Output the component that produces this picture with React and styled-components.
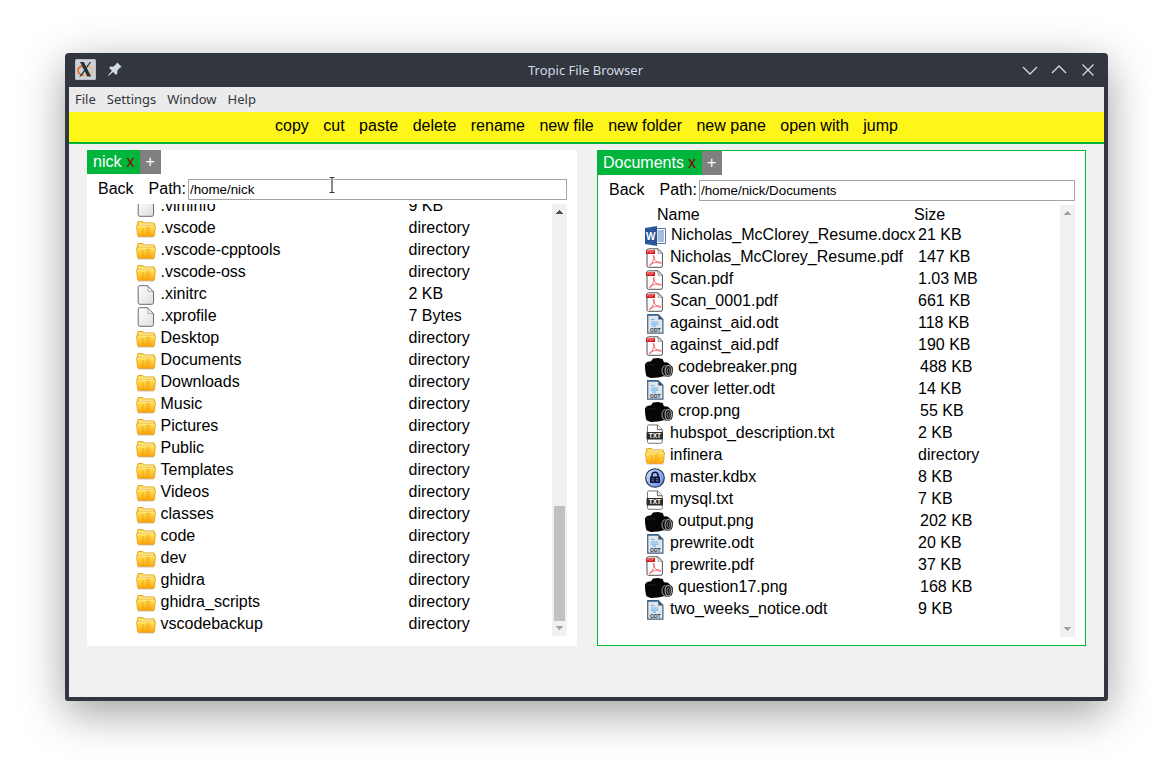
import React, { useId } from "react";
import styled, { createGlobalStyle } from "styled-components";

const GREEN = "#00b53c";
const FRAME = "#31363f";

const GlobalStyle = createGlobalStyle`
  *, *::before, *::after { box-sizing: border-box; }
  body {
    margin: 0;
    background: #fff;
    color: #000;
    font-family: "Liberation Sans", Arial, sans-serif;
    font-size: 16px;
  }
  button {
    font: inherit;
    color: inherit;
    background: none;
    border: 0;
    margin: 0;
    padding: 0;
    cursor: pointer;
  }
`;

const Desktop = styled.div`
  display: flex;
  height: 100vh;
  min-height: 480px;
  padding: 53px 65px 77px;
`;

const Window = styled.div`
  flex: 1;
  min-width: 0;
  display: flex;
  flex-direction: column;
  padding: 0 4px 4px;
  background: ${FRAME};
  border-radius: 4px 4px 3px 3px;
  box-shadow: 0 12px 44px rgba(0, 0, 0, 0.38);
`;

const TitleBar = styled.header`
  display: grid;
  grid-template-columns: 1fr auto 1fr;
  align-items: center;
  height: 34px;
  padding: 0 8px 0 6px;
  color: #d3dae3;
  font-family: "Noto Sans", sans-serif;
  font-size: 13px;
`;

const TitleGroup = styled.div`
  display: flex;
  align-items: center;
  justify-content: ${(p) => (p.$end ? "flex-end" : "flex-start")};
  gap: ${(p) => (p.$end ? "13px" : "11px")};
  padding-bottom: 1px;
`;

const Title = styled.h1`
  margin: 0;
  font-size: 13px;
  font-weight: 400;
`;

const TitleButton = styled.button`
  display: flex;
  svg { display: block; }
`;

const MenuBar = styled.nav`
  display: flex;
  gap: 11px;
  height: 25px;
  padding: 0 6px 2px;
  background: #ebebeb;
  color: #31363b;
  font-family: "Noto Sans", sans-serif;
  font-size: 13px;
`;

const Toolbar = styled.div`
  height: 32px;
  background: #fff619;
  border-bottom: 2px solid ${GREEN};
  line-height: 28px;
  text-align: center;
  white-space: nowrap;
`;

const ToolButton = styled.button`
  padding: 0 5px;
`;

const Workspace = styled.main`
  flex: 1;
  min-height: 0;
  display: grid;
  grid-template-columns: repeat(2, minmax(0, 1fr));
  grid-template-rows: minmax(0, 1fr);
  gap: 20px;
  padding: 6px 17px 51px 18px;
  background: #f1f1f1;
`;

const PaneBox = styled.section`
  min-width: 0;
  display: flex;
  flex-direction: column;
  margin-right: ${(p) => (p.$active ? "1px" : "0")};
  padding-bottom: ${(p) => (p.$active ? "8px" : "10px")};
  background: #fff;
  border: ${(p) => (p.$active ? `1px solid ${GREEN}` : "0")};
`;

const Tabs = styled.div`
  display: flex;
  height: 24px;
  color: #fff;
  line-height: 24px;
`;

const Tab = styled.div`
  display: flex;
  gap: ${(p) => (p.$active ? "4px" : "5px")};
  padding: 0 6px 0 ${(p) => (p.$active ? "5px" : "6px")};
  background: ${GREEN};
`;

const CloseTab = styled.button`
  color: #8b0000;
`;

const AddTab = styled.button`
  padding: 0 6px 0 5px;
  background: #808080;
`;

const PathRow = styled.div`
  display: flex;
  align-items: flex-start;
  height: 21px;
  margin: 5px 10px 4px;
  padding-left: 1px;
  line-height: 20px;
`;

const BackButton = styled.button`
  margin-right: 15px;
`;

const PathLabel = styled.label`
  margin-right: 2px;
`;

const PathField = styled.div`
  position: relative;
  flex: 1;
  min-width: 0;
`;

const PathInput = styled.input`
  display: block;
  width: 100%;
  height: 21px;
  padding: 1px;
  border: 1px solid #a5a5a5;
  background: #fff;
  color: #000;
  font-family: inherit;
`;

const TextPointer = styled.svg`
  position: absolute;
  left: 139px;
  top: -3px;
  pointer-events: none;
`;

const Listing = styled.div`
  flex: 1;
  min-height: 0;
  display: flex;
  margin: 0 10px;
`;

const ListView = styled.div`
  flex: 1;
  min-width: 0;
  display: flex;
  flex-direction: column;
  justify-content: ${(p) => (p.$scrolledToEnd ? "flex-end" : "flex-start")};
  align-items: center;
  overflow: hidden;
`;

const FileTable = styled.table`
  flex: none;
  width: 378px;
  table-layout: fixed;
  border-collapse: collapse;
  white-space: nowrap;
`;

const HeadCell = styled.th`
  width: ${(p) => (p.$name ? "269px" : "auto")};
  height: 20px;
  padding: 0 0 1px ${(p) => (p.$name ? "12px" : "0")};
  font-weight: 400;
  line-height: 19px;
  text-align: left;
`;

const NameCell = styled.td`
  width: 269px;
  height: 22px;
  padding: 0;
`;

const NameContent = styled.div`
  display: flex;
  gap: 5px;
  height: 22px;
  line-height: 20px;
  svg { flex: none; margin-top: 1px; }
`;

const SizeCell = styled.td`
  height: 22px;
  padding: 0 0 2px ${(p) => (p.$wide ? "6px" : "4px")};
  line-height: 20px;
`;

const ScrollBar = styled.div`
  width: 15px;
  display: flex;
  flex-direction: column;
  background: #f1f1f1;
`;

const ScrollArrow = styled.button`
  display: flex;
  align-items: center;
  justify-content: center;
  height: 15px;
  padding-bottom: ${(p) => (p.$down ? "1px" : "0")};
  color: ${(p) => (p.disabled ? "#a3a3a3" : "#505050")};
`;

const ScrollTrack = styled.div`
  flex: 1;
  display: flex;
  flex-direction: column;
  justify-content: flex-end;
  padding: 0 2px;
`;

const ScrollThumb = styled.div`
  height: 28.6%;
  background: #c1c1c1;
`;

const BadgeText = styled.text`
  font-family: "Liberation Sans", Arial, sans-serif;
  font-weight: 700;
  text-anchor: middle;
`;

const art = { width: 20, height: 20, viewBox: "0 0 20 20", "aria-hidden": true };

function FolderIcon() {
  return (
    <svg {...art}>
      <defs>
        <linearGradient id="folderFace" x1="0" y1="0" x2="0" y2="1">
          <stop offset="0" stopColor="#ffe75c" />
          <stop offset="1" stopColor="#ffa60c" />
        </linearGradient>
      </defs>
      <path d="M1.500 8V3.400q0-.9.9-.9h4.400l1.400 1.400h9.400q.9 0 .9.900V8z" fill="#ffd94a" stroke="#d9970f" strokeWidth=".8" />
      <path d="M3 5.300h14" stroke="#fff8cf" strokeWidth="1.200" />
      <path d="M.5 7q-.1-.8.7-.8h17.600q.8 0 .7.800l-1 9.400q-.1 1-1.100 1H2.600q-1 0-1.100-1z" fill="url(#folderFace)" stroke="#e8980c" strokeWidth=".7" />
      <path d="M7 9v7.300h3.800V8.600l2-1.400v8" fill="none" stroke="#ee9c10" strokeWidth=".7" />
      <path d="M1.300 7.100h17.400" stroke="#fff3a6" strokeWidth=".8" />
      <path d="M2 18.300h16" stroke="#999" strokeOpacity=".35" />
    </svg>
  );
}

function FileIcon() {
  return (
    <svg {...art}>
      <defs>
        <linearGradient id="paper" x1="0" y1="0" x2="1" y2="1">
          <stop offset="0" stopColor="#fff" />
          <stop offset="1" stopColor="#dedede" />
        </linearGradient>
      </defs>
      <path d="M4 .7h7.600l5.900 6v10.800q0 1.800-1.800 1.800H4q-1.800 0-1.800-1.800v-15Q2.200.7 4 .7z" fill="url(#paper)" stroke="#6b6b6b" />
      <path d="M11.500 1q.9 2.300.4 5.300 3-.3 5.400.6z" fill="#fff" stroke="#8a8a8a" strokeWidth=".7" />
    </svg>
  );
}

function WordIcon() {
  return (
    <svg {...art} width="21" viewBox="0 0 21 20">
      <path d="M11 2.500h9.500v15H11z" fill="#fff" stroke="#2b579a" strokeWidth=".8" />
      <path d="M12.500 5h6.500M12.500 7h6.500M12.500 9h6.500M12.500 11h6.500M12.500 13h6.500M12.500 15h6.500" stroke="#4f78b6" strokeWidth="1" />
      <path d="M0 2 12 0v20L0 18z" fill="#2a5699" />
      <BadgeText x="5.800" y="13.500" fontSize="10" fill="#fff">W</BadgeText>
    </svg>
  );
}

function PdfIcon() {
  return (
    <svg {...art}>
      <path d="M3.500.8h9.700l4.200 4.300v12.700q0 1.500-1.500 1.500H3.500Q2 19.300 2 17.800V2.300Q2 .8 3.500.8z" fill="#fff" stroke="#505050" />
      <path d="M12.800 1q.6 2 .3 4.300 2.400-.2 4.200.2z" fill="#eee" stroke="#777" strokeWidth=".7" />
      <path d="M1 2h9v4H1z" fill="#d81419" />
      <BadgeText x="5.500" y="5.200" fontSize="3.500" fill="#f2a0a0">PDF</BadgeText>
      <path d="M9 7.300q-1 0-.6 1.400.9 3.300 3.700 5.400 2.400 1.500 3.800 1.100.6-1-1.700-1.200-4.700-.2-8.400 1.900-2 1.300-1.300 1.800 1.200.4 3.200-3.600Q9.800 9.300 9 7.300z" fill="none" stroke="#f04a50" strokeWidth=".8" />
    </svg>
  );
}

function OdtIcon() {
  return (
    <svg {...art}>
      <path d="M2.700.8h10.700l4.500 4.500v13.900H2.700z" fill="#dfe6ec" stroke="#49617a" strokeWidth="1.200" />
      <path d="M2.100.8h11.500" stroke="#2f5f8c" strokeWidth="1.400" />
      <path d="M13.300.8v4.600h4.600z" fill="#34536f" />
      <path d="M6 5.500h3.500M6 8h7M6 10.200h7.500M7.500 12.200h3.500" stroke="#6bb5f2" strokeWidth="1.200" />
      <BadgeText x="10.300" y="18" fontSize="5" fill="#22323f">ODT</BadgeText>
    </svg>
  );
}

function TxtIcon() {
  return (
    <svg {...art}>
      <path d="M4 .9h8.600l4.700 4.600v12.300q0 1.500-1.500 1.500H4q-1.500 0-1.500-1.500V2.400Q2.500.9 4 .9z" fill="#fff" stroke="#777" />
      <path d="M12.400 1v4.700h4.700" fill="#f1f1f1" stroke="#555" strokeWidth=".9" />
      <rect x="1.500" y="8" width="16.500" height="7.500" rx="1" fill="#2d2d2d" />
      <BadgeText x="9.800" y="14" fontSize="6.500" fill="#fff">TXT</BadgeText>
    </svg>
  );
}

function KeyFileIcon() {
  return (
    <svg {...art}>
      <defs>
        <linearGradient id="vault" x1="0" y1="0" x2="1" y2="1">
          <stop offset="0" stopColor="#d9e4ff" />
          <stop offset="1" stopColor="#5580f0" />
        </linearGradient>
      </defs>
      <circle cx="10" cy="10" r="9.300" fill="url(#vault)" stroke="#252b40" strokeWidth="1.100" />
      <path d="M7 9V7.300a3 3 0 0 1 6 0V9" fill="none" stroke="#10152c" strokeWidth="1.600" />
      <rect x="5" y="8.600" width="10" height="6.400" rx=".8" fill="#10152c" />
      <path d="M6.500 10.800h7M6.500 12.900h7" stroke="#7f9bea" strokeWidth=".8" />
      <path d="M10 10v4" stroke="#10152c" strokeWidth="1.800" />
    </svg>
  );
}

function CameraIcon() {
  return (
    <svg width="28" height="20" viewBox="0 0 28 20" aria-hidden="true">
      <path d="M0 6.200 2 4l4-.8L8 .6l5-.5 4.600 1 1.400 3.200 3.500.3 2.700 2.200 2.400 2.200q.8 5-.9 8.200l-2.500 1.500-5.500-.5-5.500 1.300-7.500.4-4.300-1.700Q-.3 12 0 6.200z" fill="#060606" />
      <path d="M1.500 7.500q4-1.500 8.500-.5" fill="none" stroke="#2c2c2c" strokeWidth=".7" />
      <path d="M20.500 7.500q-3.500 1-3.500 5t3.500 5.500" fill="none" stroke="#8a8a8a" strokeWidth="1.100" />
      <ellipse cx="23.300" cy="12.600" rx="3.200" ry="5.300" fill="#222" stroke="#999" strokeWidth="1.200" />
      <ellipse cx="23.500" cy="12.800" rx="1.200" ry="2.600" fill="#0a0a0a" stroke="#c8c8c8" strokeWidth=".5" />
    </svg>
  );
}

function AppLogo() {
  return (
    <svg width="21" height="21" viewBox="0 0 21 21" aria-hidden="true">
      <rect width="21" height="21" rx="1.500" fill="#b9c0c4" />
      <rect x="1" y="1" width="19" height="19" rx="1" fill="#cbd1d4" />
      <ellipse cx="10.500" cy="11.500" rx="7.600" ry="4.800" fill="none" stroke="#efb775" strokeWidth="1.200" />
      <path d="M8.500 6.900Q3 7.800 3 11.500t5.500 4.800" fill="none" stroke="#f26522" strokeWidth="1.600" />
      <path d="M5 3h3.800l7.400 14.600h-3.900z" fill="#2b3236" />
      <path d="M14.800 3h1.400l-4.900 6.800-.6-1.300zM9.100 11l.7 1.400-3.900 5.200H4.400z" fill="#2b3236" />
    </svg>
  );
}

function PinIcon() {
  return (
    <svg width="15" height="15" viewBox="0 0 15 15" aria-hidden="true">
      <path d="M10.200.4 14.600 4.800l-.8.8-.7-.1-2.900 3.200.2 2.900-1.300 1.300-3-3L1.300 14 .9 13.600l4-4.900-2.900-2.900 1.300-1.300 2.900.2 3.300-2.900-.1-.6z" fill="#d3dae3" />
    </svg>
  );
}

function WindowGlyph({ d }) {
  return (
    <svg width="16" height="16" viewBox="0 0 16 16" fill="none" stroke="#d3dae3" strokeWidth="1.300" aria-hidden="true">
      <path d={d} />
    </svg>
  );
}

const icons = {
  folder: FolderIcon,
  file: FileIcon,
  word: WordIcon,
  pdf: PdfIcon,
  odt: OdtIcon,
  txt: TxtIcon,
  key: KeyFileIcon,
  image: CameraIcon,
};

const folder = (name) => ["folder", name, "directory"];

const homeFiles = [
  ["file", ".viminfo", "9 KB"],
  folder(".vscode"),
  folder(".vscode-cpptools"),
  folder(".vscode-oss"),
  ["file", ".xinitrc", "2 KB"],
  ["file", ".xprofile", "7 Bytes"],
  ...["Desktop", "Documents", "Downloads", "Music", "Pictures", "Public", "Templates", "Videos",
    "classes", "code", "dev", "ghidra", "ghidra_scripts", "vscodebackup"].map(folder),
];

const documentFiles = [
  ["word", "Nicholas_McClorey_Resume.docx", "21 KB"],
  ["pdf", "Nicholas_McClorey_Resume.pdf", "147 KB"],
  ["pdf", "Scan.pdf", "1.03 MB"],
  ["pdf", "Scan_0001.pdf", "661 KB"],
  ["odt", "against_aid.odt", "118 KB"],
  ["pdf", "against_aid.pdf", "190 KB"],
  ["image", "codebreaker.png", "488 KB"],
  ["odt", "cover letter.odt", "14 KB"],
  ["image", "crop.png", "55 KB"],
  ["txt", "hubspot_description.txt", "2 KB"],
  folder("infinera"),
  ["key", "master.kdbx", "8 KB"],
  ["txt", "mysql.txt", "7 KB"],
  ["image", "output.png", "202 KB"],
  ["odt", "prewrite.odt", "20 KB"],
  ["pdf", "prewrite.pdf", "37 KB"],
  ["image", "question17.png", "168 KB"],
  ["odt", "two_weeks_notice.odt", "9 KB"],
];

const actions = ["copy", "cut", "paste", "delete", "rename", "new file", "new folder", "new pane", "open with", "jump"];

function Arrow({ down }) {
  return (
    <svg width="7" height="4" viewBox="0 0 7 4" shapeRendering="crispEdges" aria-hidden="true">
      <path d={down ? "M0 0h7L3.500 4z" : "M0 4h7L3.500 0z"} fill="currentColor" />
    </svg>
  );
}

function Pane({ tab, path, files, active, header, scrolled, pointer }) {
  const id = useId();
  return (
    <PaneBox $active={active}>
      <Tabs>
        <Tab $active={active}>
          <button type="button">{tab}</button>
          <CloseTab type="button">x</CloseTab>
        </Tab>
        <AddTab type="button">+</AddTab>
      </Tabs>
      <PathRow>
        <BackButton type="button">Back</BackButton>
        <PathLabel htmlFor={id}>Path:</PathLabel>
        <PathField>
          <PathInput id={id} type="text" defaultValue={path} spellCheck={false} />
          {pointer && (
            <TextPointer width="10" height="19" viewBox="0 0 10 19" aria-hidden="true">
              <path d="M2 1.500h6M5 1.500v15M2 16.500h6" stroke="#fff" strokeWidth="3" fill="none" />
              <path d="M2.500 1.500h5M5 1.500v15M2.500 16.500h5" stroke="#3a3a3a" strokeWidth="1.200" fill="none" />
            </TextPointer>
          )}
        </PathField>
      </PathRow>
      <Listing>
        <ListView $scrolledToEnd={scrolled}>
          <FileTable>
            {header && (
              <thead>
                <tr>
                  <HeadCell $name scope="col">Name</HeadCell>
                  <HeadCell scope="col">Size</HeadCell>
                </tr>
              </thead>
            )}
            <tbody>
              {files.map(([kind, name, size]) => {
                const Icon = icons[kind];
                return (
                  <tr key={name}>
                    <NameCell>
                      <NameContent>
                        <Icon />
                        <span>{name}</span>
                      </NameContent>
                    </NameCell>
                    <SizeCell $wide={kind === "image"}>{size}</SizeCell>
                  </tr>
                );
              })}
            </tbody>
          </FileTable>
        </ListView>
        <ScrollBar>
          <ScrollArrow type="button" aria-label="Scroll up" disabled={!scrolled}>
            <Arrow />
          </ScrollArrow>
          <ScrollTrack>{scrolled && <ScrollThumb />}</ScrollTrack>
          <ScrollArrow $down type="button" aria-label="Scroll down" disabled>
            <Arrow down />
          </ScrollArrow>
        </ScrollBar>
      </Listing>
    </PaneBox>
  );
}

export default function App() {
  return (
    <>
      <GlobalStyle />
      <Desktop>
        <Window>
          <TitleBar>
            <TitleGroup>
              <AppLogo />
              <TitleButton type="button" aria-label="Keep on all desktops"><PinIcon /></TitleButton>
            </TitleGroup>
            <Title>Tropic File Browser</Title>
            <TitleGroup $end>
              <TitleButton type="button" aria-label="Minimize"><WindowGlyph d="M1 5l7 7 7-7" /></TitleButton>
              <TitleButton type="button" aria-label="Maximize"><WindowGlyph d="M1 11l7-7 7 7" /></TitleButton>
              <TitleButton type="button" aria-label="Close"><WindowGlyph d="M2.500 2.500l11 11M13.500 2.500l-11 11" /></TitleButton>
            </TitleGroup>
          </TitleBar>
          <MenuBar>
            {["File", "Settings", "Window", "Help"].map((item) => (
              <button type="button" key={item}>{item}</button>
            ))}
          </MenuBar>
          <Toolbar>
            {actions.map((action) => (
              <React.Fragment key={action}>
                <ToolButton type="button">{action}</ToolButton>{" "}
              </React.Fragment>
            ))}
          </Toolbar>
          <Workspace>
            <Pane tab="nick" path="/home/nick" files={homeFiles} scrolled pointer />
            <Pane tab="Documents" path="/home/nick/Documents" files={documentFiles} active header />
          </Workspace>
        </Window>
      </Desktop>
    </>
  );
}
